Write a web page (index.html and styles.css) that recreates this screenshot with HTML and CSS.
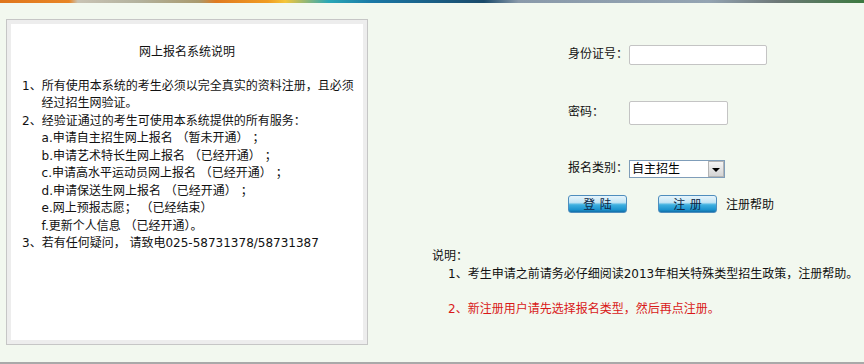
FILE: index.html
```html
<!DOCTYPE html>
<html lang="zh-CN">

<head>
    <meta charset="UTF-8">
    <title>网上报名系统</title>
    <link rel="stylesheet" href="styles.css">
</head>

<body>
    <div class="banner"></div>

    <div class="main">
        <!-- 左侧说明 -->
        <div class="panel">
            <div class="panel-in">
                <div class="title">网上报名系统说明</div>
                <div class="item">1、所有使用本系统的考生必须以完全真实的资料注册，且必须<br>经过招生网验证。</div>
                <div class="item">2、经验证通过的考生可使用本系统提供的所有服务：</div>
                <div class="sub">a.申请自主招生网上报名 （暂未开通） ；</div>
                <div class="sub">b.申请艺术特长生网上报名 （已经开通） ；</div>
                <div class="sub">c.申请高水平运动员网上报名 （已经开通） ；</div>
                <div class="sub">d.申请保送生网上报名 （已经开通） ；</div>
                <div class="sub">e.网上预报志愿； （已经结束）</div>
                <div class="sub">f.更新个人信息 （已经开通）。</div>
                <div class="item">3、若有任何疑问， 请致电025-58731378/58731387</div>
            </div>
        </div>

        <!-- 右侧登录 -->
        <div class="side">
            <div class="form">
                <div class="row r1">
                    <label>身份证号：</label>
                    <input type="text" class="ipt ipt-id">
                </div>
                <div class="row r2">
                    <label>密码：</label>
                    <input type="password" class="ipt ipt-pwd">
                </div>
                <div class="row r3">
                    <label>报名类别：</label>
                    <div class="sel">
                        <select>
                            <option>自主招生</option>
                            <option>艺术特长生</option>
                            <option>高水平运动员</option>
                            <option>保送生</option>
                        </select>
                        <span class="arrow"></span>
                    </div>
                </div>
                <div class="row r4">
                    <button class="btn">登 陆</button>
                    <button class="btn btn-reg">注 册</button>
                    <a class="help">注册帮助</a>
                </div>
            </div>

            <div class="notes">
                <div>说明：</div>
                <div class="note">1、考生申请之前请务必仔细阅读2013年相关特殊类型招生政策，注册帮助。</div>
                <div class="note red">2、新注册用户请先选择报名类型，然后再点注册。</div>
            </div>
        </div>
    </div>

    <div class="bottom"></div>
</body>

</html>
```

FILE: styles.css
```css
* {
    padding: 0;
    margin: 0;
}

body {
    background: #f2f8ef;
    font: 12px/17.5px "DejaVu Sans", "Noto Sans CJK SC", sans-serif;
    color: #111;
}

.banner {
    height: 3px;
    background: linear-gradient(to right, #df761c 0, #e88526 8%, #c9c3b4 9%, #b3b29e 16%, #a99a6e 23%, #e07a20 25%, #f09c22 31%, #f4c63a 33%, #2aa8b6 38%, #1a78a6 43%, #1a4a6a 56%, #8a9aaa 60%, #94a4b2 82%, #6e7878 90%, #3c7a40 100%);
}

.main {
    display: flex;
    height: 359px;
}

/* 左侧说明框 */
.panel {
    margin: 16px 0 0 6px;
    width: 352px;
    height: 316px;
    padding: 4px;
    border: 1px solid #c6c6c6;
    background: #ededed;
}

.panel-in {
    height: 100%;
    padding: 20px 11px 0;
    box-sizing: border-box;
    background: #fff;
    white-space: nowrap;
}

.title {
    text-align: center;
    margin-bottom: 16px;
}

.item {
    padding-left: 19.6px;
    text-indent: -19.6px;
}

.sub {
    padding-left: 19.6px;
}

/* 右侧表单 */
.side {
    flex: 1;
}

.form {
    margin: 42px 0 0 200px;
}

.row {
    display: flex;
    align-items: center;
}

.row label {
    width: 61px;
}

.r1 {
    height: 20px;
}

.r2 {
    height: 24px;
    margin-top: 36px;
}

.r3 {
    height: 18px;
    margin-top: 35px;
}

.r4 {
    height: 18px;
    margin-top: 17px;
}

.ipt {
    height: 100%;
    box-sizing: border-box;
    border: 1px solid #c4c4c4;
    border-radius: 2px;
    background: #fff;
}

.ipt-id {
    width: 138px;
}

.ipt-pwd {
    width: 99px;
}

.sel {
    position: relative;
    width: 96px;
    height: 18px;
}

.sel select {
    width: 100%;
    height: 100%;
    box-sizing: border-box;
    border: 1px solid #7f9db9;
    border-radius: 0;
    background: #fff;
    padding-left: 2px;
    font: 12px "DejaVu Sans", "Noto Sans CJK SC", sans-serif;
    color: #000;
    appearance: none;
    -webkit-appearance: none;
    outline: none;
}

.arrow {
    position: absolute;
    right: 1px;
    top: 1px;
    width: 14px;
    height: 14px;
    border: 1px solid #b4b4b4;
    background: linear-gradient(#f4f4f4, #d4d4d4);
}

.arrow:after {
    content: "";
    position: absolute;
    left: 3px;
    top: 6px;
    border-left: 4px solid transparent;
    border-right: 4px solid transparent;
    border-top: 4px solid #000;
}

.btn {
    width: 59px;
    height: 18px;
    border: 1px solid #4f8dbd;
    border-radius: 3px;
    background: linear-gradient(#e6f4fb 0, #c4e5f5 40%, #3fb0e0 55%, #1c93cf 85%, #1270a8 100%);
    font: 12px/16px "Noto Sans CJK SC", sans-serif;
    word-spacing: 2px;
    color: #0c2644;
    cursor: pointer;
}

.btn-reg {
    margin-left: 31px;
}

.help {
    margin-left: 9px;
    font-family: "Noto Sans CJK SC", sans-serif;
}

/* 底部说明 */
.notes {
    margin: 35px 0 0 64px;
    white-space: nowrap;
}

.note {
    padding-left: 16px;
}

.red {
    margin-top: 17.5px;
    color: #d91818;
}

.bottom {
    height: 2px;
    background: #a9a9a9;
}
```
